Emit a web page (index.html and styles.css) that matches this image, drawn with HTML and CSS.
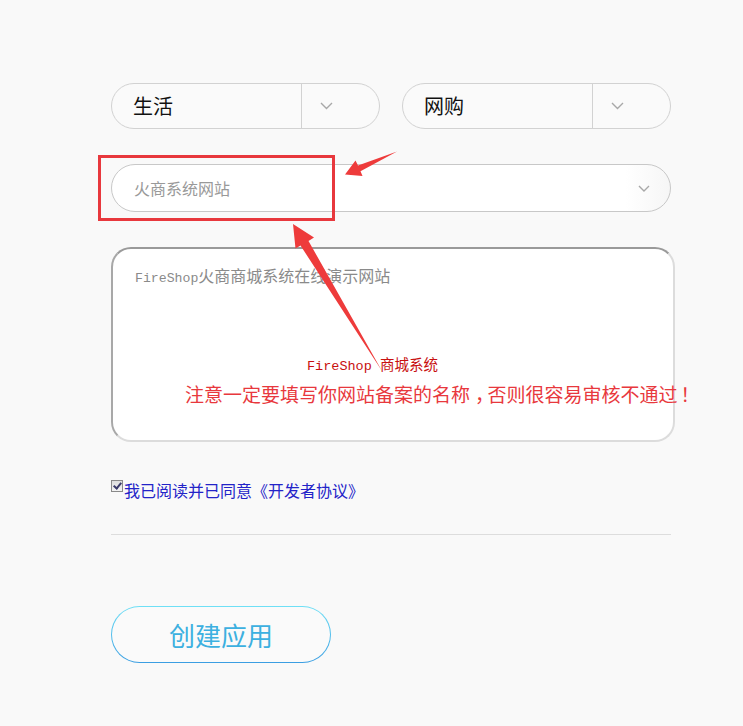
FILE: index.html
```html
<!DOCTYPE html>
<html lang="zh">
<head>
<meta charset="utf-8">
<title>创建应用</title>
<link rel="stylesheet" href="styles.css">
</head>
<body>
<div class="page">
  <div class="selects">
    <div class="select">
      <span class="select-value">生活</span>
      <span class="select-arrow"><svg width="13" height="8" viewBox="0 0 13 8"><path d="M1 1 L6.5 6.5 L12 1" fill="none" stroke="#a8a8a8" stroke-width="1.4"/></svg></span>
    </div>
    <div class="select">
      <span class="select-value">网购</span>
      <span class="select-arrow"><svg width="13" height="8" viewBox="0 0 13 8"><path d="M1 1 L6.5 6.5 L12 1" fill="none" stroke="#a8a8a8" stroke-width="1.4"/></svg></span>
    </div>
  </div>

  <div class="input">
    <span class="placeholder">火商系统网站</span>
    <svg class="input-chevron" width="12" height="7" viewBox="0 0 12 7"><path d="M1 1 L6 6 L11 1" fill="none" stroke="#a8a8a8" stroke-width="1.4"/></svg>
  </div>

  <div class="textarea">
    <span class="ta-text"><span class="mono">FireShop</span>火商商城系统在线演示网站</span>
  </div>

  <label class="agree">
    <input type="checkbox" class="agree-box" checked>
    <span class="agree-text">我已阅读并已同意《开发者协议》</span>
  </label>

  <div class="divider"></div>

  <button class="btn">创建应用</button>

  <div class="annot-box"></div>
  <div class="annot-small"><span class="mono-red">FireShop </span>商城系统</div>
  <div class="annot-big">注意一定要填写你网站备案的名称<span class="punct">，</span>否则很容易审核不通过<span class="excl">！</span></div>
  <svg class="annot-arrows" width="743" height="726" viewBox="0 0 743 726">
    <polygon fill="#ee3b3b" points="397,151.5 360.5,171.2 362.5,176 345,174.5 355.5,160.5 358,165.5"/>
    <polygon fill="#ee3b3b" points="382,371 308.5,241 314,237.5 293,224 295.5,248.5 300.5,245.5"/>
  </svg>
</div>
</body>
</html>
```

FILE: styles.css
```css
html, body {
  margin: 0;
  padding: 0;
  background: #f9f9f9;
}

body {
  font-family: "Noto Sans CJK SC", "Noto Sans", sans-serif;
  color: #222;
}

.page {
  position: relative;
  width: 743px;
  height: 726px;
  box-sizing: border-box;
  padding: 83px 0 0 111px;
  overflow: hidden;
}

.selects {
  display: flex;
  gap: 22px;
  width: 560px;
}

.select {
  display: flex;
  align-items: center;
  box-sizing: border-box;
  width: 269px;
  height: 46px;
  border: 1px solid #d2d2d2;
  border-radius: 23px;
  background: #fafafa;
}

.select-value {
  flex: 1;
  padding-left: 21px;
  font-size: 20px;
  color: #111;
  line-height: 1;
}

.select-arrow {
  display: flex;
  align-items: center;
  box-sizing: border-box;
  width: 78px;
  height: 100%;
  padding-left: 18px;
  border-left: 1px solid #d2d2d2;
}

.input {
  display: flex;
  align-items: center;
  justify-content: space-between;
  box-sizing: border-box;
  width: 560px;
  height: 48px;
  margin-top: 35px;
  padding: 0 20px 0 22px;
  border: 1px solid #c8c8c8;
  border-radius: 24px;
  background: linear-gradient(to right, #ffffff 0%, #ffffff 92%, #f6f6f6 100%);
}

.placeholder {
  font-size: 16px;
  color: #999;
}

.textarea {
  box-sizing: border-box;
  width: 564px;
  height: 195px;
  margin-top: 35px;
  padding: 14px 0 0 22px;
  border: 2px solid;
  border-color: #9a9a9a #dcdcdc #dcdcdc #a8a8a8;
  border-radius: 20px;
  background: #fff;
}

.ta-text {
  font-size: 16px;
  color: #8a8a8a;
  line-height: 24px;
}

.mono {
  font-family: "Liberation Mono", monospace;
  font-size: 13.2px;
}

.agree {
  display: flex;
  align-items: center;
  height: 22px;
  margin-top: 37px;
}

.agree-box {
  appearance: none;
  -webkit-appearance: none;
  position: relative;
  box-sizing: border-box;
  width: 12px;
  height: 12px;
  margin: 1px 1px 0 0;
  align-self: flex-start;
  border: 1px solid #8a8a8a;
  background: linear-gradient(#dedede, #f4f4f4);
}

.agree-box:checked::after {
  content: "";
  position: absolute;
  left: 3px;
  top: 0px;
  width: 3px;
  height: 6px;
  border: solid #3a3a6a;
  border-width: 0 2px 2px 0;
  transform: rotate(40deg);
}

.agree-text {
  font-size: 16px;
  color: #2323c8;
  line-height: 22px;
}

.divider {
  width: 560px;
  height: 1px;
  margin-top: 33px;
  background: #dddddd;
}

.btn {
  display: block;
  box-sizing: border-box;
  width: 220px;
  height: 57px;
  margin-top: 71px;
  padding: 0;
  border: 1px solid transparent;
  border-radius: 29px;
  background: linear-gradient(#fafafa, #fafafa) padding-box,
              linear-gradient(#6fe0f6, #3a9ee2) border-box;
  font-family: "Noto Sans CJK SC", sans-serif;
  font-size: 26px;
  color: #3cb0e0;
  cursor: pointer;
}

.annot-box {
  position: absolute;
  left: 98px;
  top: 155px;
  width: 237px;
  height: 66px;
  box-sizing: border-box;
  border: 3px solid #e8383d;
}

.annot-small {
  position: absolute;
  left: 307px;
  top: 354px;
  font-size: 14.5px;
  line-height: 20px;
  color: #c81010;
}

.mono-red {
  font-family: "Liberation Mono", monospace;
  font-size: 13.5px;
  white-space: pre;
}

.annot-big {
  position: absolute;
  left: 185px;
  top: 381px;
  font-size: 19px;
  line-height: 26px;
  color: #e8383d;
  white-space: nowrap;
}

.punct {
  font-feature-settings: "halt";
  margin: 0 3px 0 5px;
}

.excl {
  margin-left: 3px;
}

.annot-arrows {
  position: absolute;
  left: 0;
  top: 0;
  pointer-events: none;
}
```
